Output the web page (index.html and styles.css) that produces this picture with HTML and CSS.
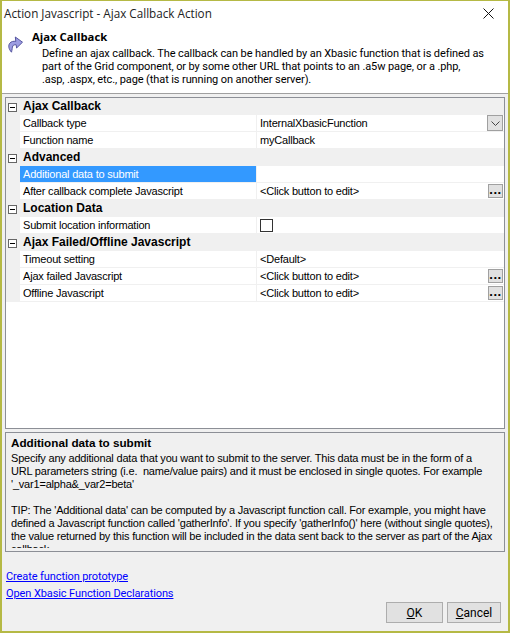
FILE: index.html
```html
<!DOCTYPE html>
<html lang="en">
<head>
  <meta charset="UTF-8" />
  <title>Action Javascript - Ajax Callback Action</title>
  <link rel="stylesheet" href="styles.css">
</head>
<body>
  <div class="dialog">
    <div class="titlebar">
      <span>Action Javascript - Ajax Callback Action</span>
      <svg class="close" width="11" height="11" viewBox="0 0 11 11"><path d="M0.5 0.5L10.5 10.5M10.5 0.5L0.5 10.5" stroke="#111" fill="none"/></svg>
    </div>

    <!-- Header -->
    <div class="header">
      <svg class="header-icon" width="15" height="17" viewBox="0 0 15 17">
        <path d="M3.5 16.2C0.6 13 0 9.5 1.8 7.2C3.2 5.4 5.6 5 7.8 5.4L7.3 1L14.5 6.2L8.6 12L8.2 8.8C6.6 8.6 5.3 9 4.8 10C4.2 11.2 4.2 13.4 3.5 16.2Z" fill="#9d9de2" stroke="#55559f" stroke-width="1"/>
      </svg>
      <div>
        <div class="header-title">Ajax Callback</div>
        <p class="header-text">Define an ajax callback. The callback can be handled by an Xbasic function that is defined as<br>part of the Grid component, or by some other URL that points to an .a5w page, or a .php,<br>.asp, .aspx, etc., page (that is running on another server).</p>
      </div>
    </div>

    <div class="content">
      <!-- Property grid -->
      <div class="grid">
        <div class="group"><span class="toggle"></span>Ajax Callback</div>
        <div class="row">
          <div class="label">Callback type</div>
          <div class="value">InternalXbasicFunction
            <span class="drop"><svg width="9" height="5" viewBox="0 0 9 5"><path d="M0.5 0.5L4.5 4.5L8.5 0.5" stroke="#444" fill="none"/></svg></span>
          </div>
        </div>
        <div class="row">
          <div class="label">Function name</div>
          <div class="value">myCallback</div>
        </div>
        <div class="group"><span class="toggle"></span>Advanced</div>
        <div class="row">
          <div class="label selected">Additional data to submit</div>
          <div class="value"></div>
        </div>
        <div class="row">
          <div class="label">After callback complete Javascript</div>
          <div class="value">&lt;Click button to edit&gt;<span class="dots">...</span></div>
        </div>
        <div class="group"><span class="toggle"></span>Location Data</div>
        <div class="row">
          <div class="label">Submit location information</div>
          <div class="value"><span class="check"></span></div>
        </div>
        <div class="group"><span class="toggle"></span>Ajax Failed/Offline Javascript</div>
        <div class="row">
          <div class="label">Timeout setting</div>
          <div class="value">&lt;Default&gt;</div>
        </div>
        <div class="row">
          <div class="label">Ajax failed Javascript</div>
          <div class="value">&lt;Click button to edit&gt;<span class="dots">...</span></div>
        </div>
        <div class="row">
          <div class="label">Offline Javascript</div>
          <div class="value">&lt;Click button to edit&gt;<span class="dots">...</span></div>
        </div>
      </div>

      <!-- Help panel -->
      <div class="help">
        <div class="help-title">Additional data to submit</div>
        <p>Specify any additional data that you want to submit to the server. This data must be in the form of a<br>URL parameters string (i.e.&nbsp; name/value pairs) and it must be enclosed in single quotes. For example<br>'_var1=alpha&amp;_var2=beta'<br><br>TIP: The 'Additional data' can be computed by a Javascript function call. For example, you might have<br>defined a Javascript function called 'gatherInfo'. If you specify 'gatherInfo()' here (without single quotes),<br>the value returned by this function will be included in the data sent back to the server as part of the Ajax<br>callback.</p>
      </div>

      <div class="links">
        <a href="#">Create function prototype</a>
        <a href="#">Open Xbasic Function Declarations</a>
      </div>

      <div class="buttons">
        <button class="ok"><u>O</u>K</button>
        <button class="cancel"><u>C</u>ancel</button>
      </div>
    </div>
  </div>
</body>
</html>
```

FILE: styles.css
```css
* {
  box-sizing: border-box;
}
body {
  margin: 0;
  font-family: "Liberation Sans", Arial, sans-serif;
  font-size: 11px;
  color: #000;
}
.dialog {
  width: 510px;
  height: 633px;
  border: 2px solid #b5b945;
  border-top-width: 1px;
  background: #f0f0f0;
  display: flex;
  flex-direction: column;
}
.titlebar {
  height: 25px;
  background: #fff;
  padding: 4px 14px 0 2px;
  display: flex;
  justify-content: space-between;
  align-items: flex-start;
  font-family: "Open Sans", sans-serif;
  font-size: 11.7px;
  line-height: 16px;
  color: #222;
}
.close {
  margin-top: 3px;
}
.header {
  height: 68px;
  background: #fff;
  border-bottom: 1px solid #a0a0a0;
  display: flex;
  padding: 4px 0 0 6px;
  font-family: "Roboto", sans-serif;
  font-size: 11px;
  letter-spacing: -0.1px;
}
.header-icon {
  margin: 6px 9px 0 0;
}
.header-title {
  font-family: "Open Sans", sans-serif;
  font-weight: bold;
  font-size: 11.3px;
  letter-spacing: 0;
  line-height: 14px;
}
.header-text {
  margin: 3px 0 0 10px;
  line-height: 13px;
  white-space: nowrap;
}
.content {
  flex: 1;
  padding: 3px 3px 0 3px;
  display: flex;
  flex-direction: column;
}
.grid {
  height: 332px;
  border: 1px solid #8c8f96;
  background: #fff;
  padding-bottom: 1px;
}
.group {
  height: 17px;
  background: #f0f0f0;
  padding-left: 17px;
  position: relative;
  font-weight: bold;
  font-size: 12px;
  line-height: 16px;
}
.toggle {
  position: absolute;
  left: 2px;
  top: 5px;
  width: 9px;
  height: 9px;
  border: 1px solid #666;
  background: #fff;
}
.toggle::after {
  content: "";
  position: absolute;
  left: 1px;
  top: 3px;
  width: 5px;
  height: 1px;
  background: #000;
}
.row {
  height: 17px;
  display: flex;
  padding-left: 14px;
  background: #f0f0f0;
}
.label, .value {
  height: 16px;
  line-height: 17px;
  background: #fff;
  white-space: nowrap;
  letter-spacing: -0.2px;
}
.label {
  width: 236px;
  padding-left: 3px;
}
.label.selected {
  background: #3399ff;
  color: #fff;
}
.value {
  flex: 1;
  margin-left: 1px;
  padding-left: 3px;
  position: relative;
}
.drop, .dots {
  position: absolute;
  right: 1px;
  background: #e1e1e1;
  border: 1px solid #a0a0a0;
  display: flex;
  justify-content: center;
}
.drop {
  top: 0;
  width: 16px;
  height: 16px;
  align-items: center;
}
.dots {
  top: 1px;
  width: 15px;
  height: 14px;
  font-weight: bold;
  font-size: 13px;
  letter-spacing: 0.6px;
  line-height: 9px;
}
.check {
  display: block;
  width: 13px;
  height: 13px;
  margin-top: 2px;
  border: 1px solid #333;
  background: #fff;
}
.help {
  height: 120px;
  margin-top: 3px;
  border: 1px solid #8c8f96;
  padding: 3px 5px;
  white-space: nowrap;
}
.help-title {
  font-weight: bold;
  font-size: 11.7px;
  line-height: 13px;
}
.help p {
  margin: 3px 0 0;
  height: 96px;
  overflow: hidden;
  line-height: 13px;
  letter-spacing: -0.2px;
}
.links {
  margin-top: 17px;
  padding-left: 1px;
  display: flex;
  flex-direction: column;
  align-items: flex-start;
  gap: 2px;
}
.links a {
  color: #0000ff;
  line-height: 15px;
  font-family: "Roboto", sans-serif;
  font-size: 11px;
  letter-spacing: -0.1px;
}
.buttons {
  margin-top: 1px;
  display: flex;
  justify-content: flex-end;
  gap: 4px;
  padding-right: 4px;
}
button {
  height: 21px;
  background: #e1e1e1;
  border: 1px solid #adadad;
  font-family: "Roboto", sans-serif;
  font-size: 12px;
  padding: 0;
}
.ok {
  width: 57px;
}
.cancel {
  width: 54px;
}
```
